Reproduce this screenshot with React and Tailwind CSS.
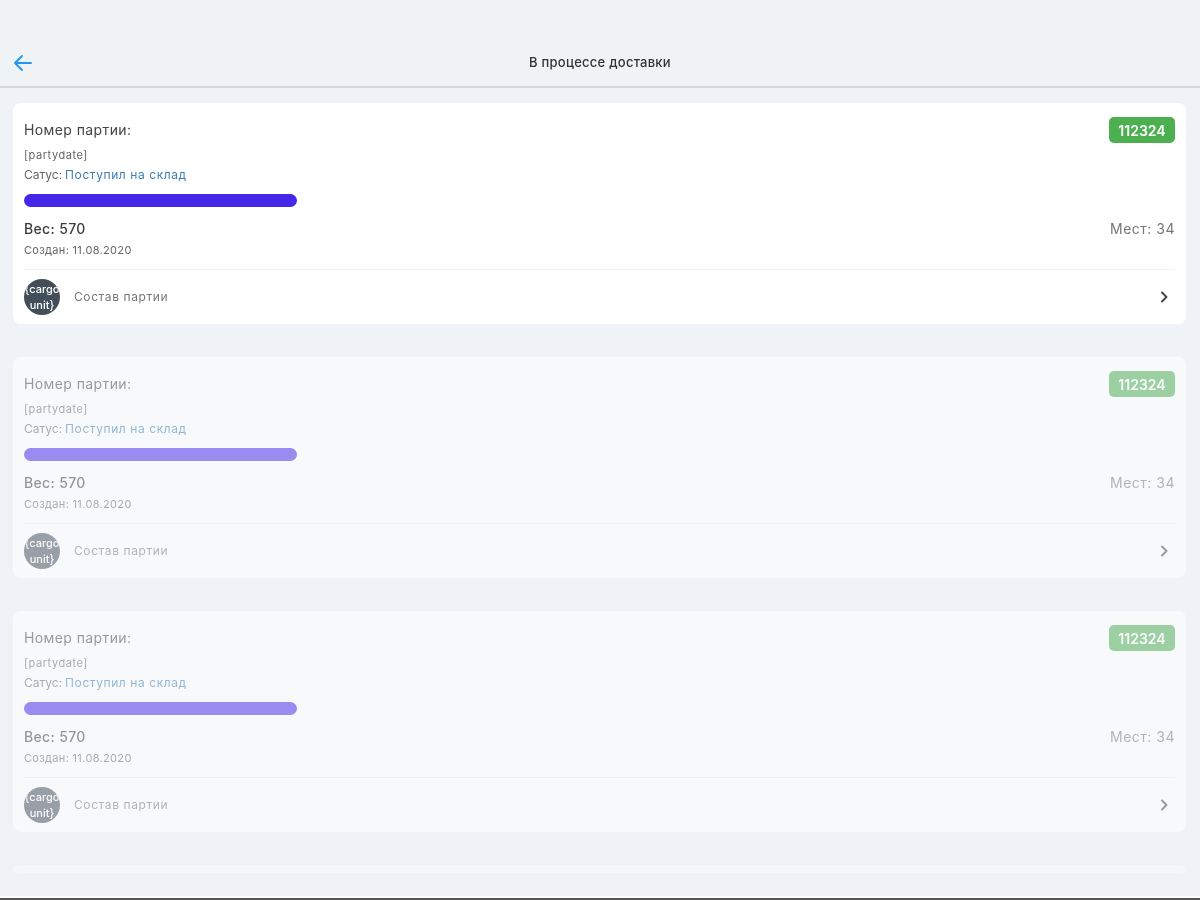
const font = { fontFamily: '"Inter", "Noto Sans", sans-serif' };

function Avatar() {
  return (
    <div className="flex h-9 w-9 shrink-0 flex-col items-center justify-center overflow-hidden rounded-full bg-[#434e58] text-[11px] leading-[16px] font-medium text-white">
      <span className="whitespace-nowrap">{"{cargo"}</span>
      <span className="whitespace-nowrap">{"unit}"}</span>
    </div>
  );
}

function Card({ faded }) {
  return (
    <section className={`h-[221px] rounded-lg bg-white px-[11px] pt-[14px] ${faded ? "opacity-50" : ""}`}>
      <div className="flex items-start justify-between">
        <span className="pt-[3px] text-[14px] leading-[20px] tracking-[0.4px] text-[#444]">Номер партии:</span>
        <span className="flex h-[26px] w-[66px] items-center justify-center rounded-[5px] bg-[#4caf50] text-[14px] font-semibold text-white">112324</span>
      </div>
      <div className="mt-[5px] text-[11px] leading-[14px] tracking-[0.55px] text-[#666]">[partydate]</div>
      <div className="mt-[4px] flex gap-[3px] text-[12px] leading-[18px] text-[#666]">
        <span>Сатус:</span>
        <span className="tracking-[0.58px] text-[#3f7fb5]">Поступил на склад</span>
      </div>
      <div className="mt-[10px] h-[13px] w-[273px] rounded-full bg-[#4527ea]" />
      <div className="mt-[12px] flex items-center justify-between">
        <span className="text-[14px] leading-[20px] tracking-[0.35px] font-medium text-[#3a3a3a]">Вес: 570</span>
        <span className="text-[14px] leading-[20px] tracking-[0.5px] font-normal text-[#777]">Мест: 34</span>
      </div>
      <div className="mt-[3px] text-[11px] leading-[16px] tracking-[0.33px] text-[#666]">Создан: 11.08.2020</div>
      <div className="mt-[11px] flex h-[55px] items-center border-t border-[#f0f2f4]">
        <Avatar />
        <span className="ml-[14px] flex-1 text-[12px] tracking-[0.6px] text-[#777]">Состав партии</span>
        <svg className="mr-[5px]" width="11" height="12" viewBox="0 0 11 12" fill="none" stroke="#444" strokeWidth="1.9" strokeLinecap="round" strokeLinejoin="round">
          <path d="M3 1.5 7.5 6 3 10.5" />
        </svg>
      </div>
    </section>
  );
}

export default function App() {
  return (
    <div style={font} className="flex h-[900px] flex-col overflow-hidden bg-[#eff3f7] blur-[0.4px]">
      <header className="flex h-[88px] shrink-0 items-end border-b-2 border-[#d3d8dd] bg-[#f0f3f6] pb-[10px]">
        <div className="relative flex h-[26px] w-full items-center justify-center">
          <svg className="absolute left-[13px] top-[3px]" width="20" height="20" viewBox="0 0 20 20" fill="none" stroke="#2196f3" strokeWidth="1.9" strokeLinecap="round" strokeLinejoin="round">
            <path d="M18 10H2M9 3l-7 7 7 7" />
          </svg>
          <h1 className="text-[13px] tracking-[0.25px] font-medium text-[#333]">В процессе доставки</h1>
        </div>
      </header>
      <main className="flex flex-1 flex-col gap-[33px] pl-[13px] pr-[14px] pt-[15px]">
        <Card />
        <Card faded />
        <Card faded />
        <div className="h-[8px] rounded-lg bg-white/30" />
      </main>
      <div className="h-[2px] shrink-0 bg-white" />
      <div className="h-[2px] shrink-0 bg-[#555]" />
    </div>
  );
}
